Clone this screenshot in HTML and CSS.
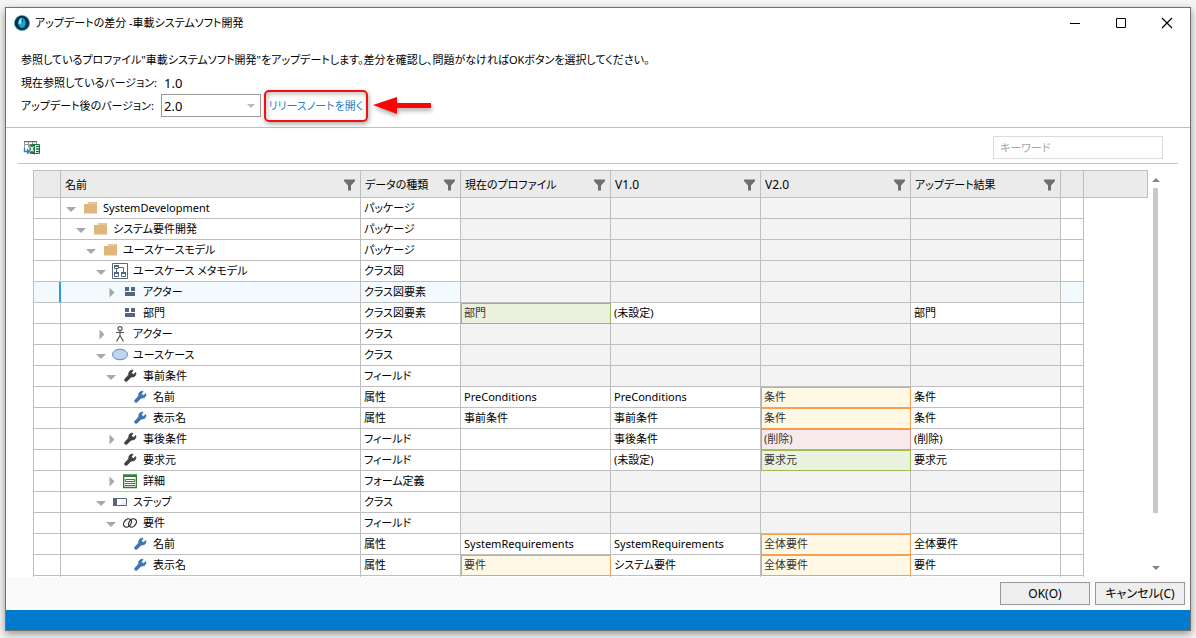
FILE: index.html
```html
<!DOCTYPE html>
<html lang="ja">
<head>
<meta charset="utf-8">
<title>アップデートの差分 -車載システムソフト開発</title>
<link rel="stylesheet" href="styles.css">
</head>
<body>
<svg class="defs" aria-hidden="true">
  <symbol id="open" viewBox="0 0 11 16"><path d="M0 7h10L5 12z" fill="#a8a8a8"/></symbol>
  <symbol id="closed" viewBox="0 0 11 16"><path d="M3.500 3.500v10L8.500 8.500z" fill="#a8a8a8"/></symbol>
  <symbol id="funnel" viewBox="0 0 12 12"><path d="M0 .5h11v1.500L7 6.500v5H4v-5L0 2z" fill="#6f6f6f"/></symbol>
  <symbol id="folder" viewBox="0 0 16 16"><path d="M2 4h3.500l1-2H15v11.500H2z" fill="#deb77d"/><path d="M6.500 4.500l.8-1.500H14" fill="none" stroke="#f3dfc0" stroke-width=".8"/></symbol>
  <symbol id="diagram" viewBox="0 0 16 16"><path d="M.5.5h15v15H.5z" fill="#fff" stroke="#56677f"/><path d="M2.500 2.500h4v3h-4zM2.500 10.500h4v3h-4zM9.500 10.500h4v3h-4zM4.500 6v4M7 4.500h4.500V10" fill="none" stroke="#56677f"/><path d="M2 2h5v2H2zM2 9h5v2H2zM9 9h5v2H9z" fill="#56677f"/></symbol>
  <symbol id="element" viewBox="0 0 16 16"><path d="M3 3h4v4H3zM9 3h4v4H9zM3 8h10v4H3z" fill="#53657f"/></symbol>
  <symbol id="actor" viewBox="0 0 16 16"><g fill="none" stroke="#555" stroke-width="1.200"><circle cx="8" cy="2.600" r="2"/><path d="M8 4.600V10M4 6.500h8M8 9.500l-3.500 6M8 9.500l3.500 6"/></g></symbol>
  <symbol id="usecase" viewBox="0 0 16 16"><ellipse cx="8" cy="7.500" rx="7.500" ry="5.300" fill="#bdd4f0" stroke="#5b87c0"/></symbol>
  <symbol id="wrench" viewBox="0 0 16 16"><path d="M11 2.300L9.500 4.500l.6 1.600 1.700.3 1.900-1.800c.7 2.400-.9 4.400-3.400 4.300-1 0-1.500.3-2.200 1l-2.700 2.900c-1.600 1.500-3.700-.3-2.300-2.100L6 7.800c.7-.7.800-1.200.8-2.200C6.900 3.200 8.900 1.800 11 2.300z" fill="currentColor" stroke="currentColor" stroke-width=".9" stroke-linejoin="round"/></symbol>
  <symbol id="form" viewBox="0 0 16 16"><path d="M1.700 2.200h12.600v12.300H1.700z" fill="#fff" stroke="#348038" stroke-width="1.400"/><path d="M1 1.500h14V4H1z" fill="#348038"/><path d="M3.500 6.500h9v2h-9zM3 10.500h10M3 12.500h10" fill="none" stroke="#348038"/></symbol>
  <symbol id="step" viewBox="0 0 16 16"><path d="M1.500 4.500h13v7h-13z" fill="#fff" stroke="#56677f"/><path d="M14 5v6H7z" fill="#eee"/><path d="M1 4h4v8H1z" fill="#56677f"/></symbol>
  <symbol id="rings" viewBox="0 0 16 16"><g fill="none" stroke="#333" stroke-width="1.300"><ellipse cx="5.500" cy="8" rx="3.400" ry="4.600" transform="rotate(40 5.500 8)"/><ellipse cx="10.500" cy="8" rx="3.400" ry="4.600" transform="rotate(40 10.500 8)"/></g></symbol>
</svg>
<main class="window">
  <header class="titlebar">
    <svg class="logo" viewBox="0 0 16 16"><circle cx="8" cy="8" r="7.600" fill="#05344b" stroke="#3aa5bd" stroke-width=".6"/><ellipse cx="8" cy="8" rx="3.600" ry="5" fill="#16a9d8"/><path d="M8 3v5l-3.400 1.500C4 6 5.500 3 8 3z" fill="#8fe0f2"/><path d="M8.200 4v3.500" stroke="#05344b"/></svg>
    <h1 class="title">アップデートの差分 -車載システムソフト開発</h1>
    <button class="winbtn" aria-label="最小化"><svg viewBox="0 0 12 12"><path d="M1 6.500h10" stroke="#000"/></svg></button>
    <button class="winbtn" aria-label="最大化"><svg viewBox="0 0 12 12"><path d="M1.500 1.500h9v9h-9z" fill="none" stroke="#000"/></svg></button>
    <button class="winbtn" aria-label="閉じる"><svg viewBox="0 0 12 12"><path d="M1 1l10 10M11 1L1 11" stroke="#000" stroke-width="1.200"/></svg></button>
  </header>
  <section class="intro">
    <p class="line">参照しているプロファイル"車載システムソフト開発"をアップデートします。差分を確認し、問題がなければOKボタンを選択してください。</p>
    <div class="line"><span class="label">現在参照しているバージョン:</span><span class="value">1.0</span></div>
    <div class="line">
      <label class="label" for="version">アップデート後のバージョン:</label>
      <span class="combo"><select id="version"><option>2.0</option></select><svg viewBox="0 0 8 4"><path d="M0 0h8L4 4z" fill="#b9b9b9"/></svg></span>
      <a class="notes" href="#notes">リリースノートを開く</a>
      <svg class="pointer" viewBox="0 0 60 20"><path d="M1 9L25 1v6h34v5H25v6z" fill="#fa0505"/></svg>
    </div>
  </section>
  <section class="toolbar">
    <button class="export" aria-label="Excelに出力"><svg viewBox="0 0 18 16"><path d="M1.500 8V1.500h12V4M1.500 4.500h9M5.500 1.500v6M9.500 1.500v4" fill="none" stroke="#999"/><path d="M1 1h13v1.200H1z" fill="#666"/><path d="M1.500 8v3.500H6M4 9.300l2.200 2.200L4 13.700" fill="none" stroke="#3c7cc0" stroke-width="1.400"/><path d="M6.500 5L12 3.500v11L6.500 13.500z" fill="#207347"/><path d="M12 4.500h4.500v9H12" fill="#fff" stroke="#207347"/><path d="M13 6.500h3M13 9h3M13 11.500h3" stroke="#207347" stroke-width="1.400"/><path d="M7.500 6.500l3 5M10.500 6.500l-3 5" stroke="#fff" stroke-width="1.200"/></svg></button>
    <input class="search" type="text" placeholder="キーワード" aria-label="キーワード">
  </section>
  <section class="content">
    <div class="viewport">
      <table class="grid">
        <colgroup><col class="c-mark"><col class="c-name"><col class="c-type"><col class="c-val"><col class="c-val"><col class="c-val"><col class="c-val"><col class="c-end"><col></colgroup>
        <thead><tr>
          <th></th>
          <th><div class="head">名前<svg><use href="#funnel"/></svg></div></th>
          <th><div class="head">データの種類<svg><use href="#funnel"/></svg></div></th>
          <th><div class="head">現在のプロファイル<svg><use href="#funnel"/></svg></div></th>
          <th><div class="head"><span class="latin">V1.0</span><svg><use href="#funnel"/></svg></div></th>
          <th><div class="head"><span class="latin">V2.0</span><svg><use href="#funnel"/></svg></div></th>
          <th><div class="head">アップデート結果<svg><use href="#funnel"/></svg></div></th>
          <th></th><th></th>
        </tr></thead>
        <tbody>
          <tr><td></td><td><div class="node l0"><svg class="tw"><use href="#open"/></svg><svg class="ic"><use href="#folder"/></svg>SystemDevelopment</div></td><td>パッケージ</td><td class="na"></td><td class="na"></td><td class="na"></td><td class="na"></td><td></td><td></td></tr>
          <tr><td></td><td><div class="node l1"><svg class="tw"><use href="#open"/></svg><svg class="ic"><use href="#folder"/></svg>システム要件開発</div></td><td>パッケージ</td><td class="na"></td><td class="na"></td><td class="na"></td><td class="na"></td><td></td><td></td></tr>
          <tr><td></td><td><div class="node l2"><svg class="tw"><use href="#open"/></svg><svg class="ic"><use href="#folder"/></svg>ユースケースモデル</div></td><td>パッケージ</td><td class="na"></td><td class="na"></td><td class="na"></td><td class="na"></td><td></td><td></td></tr>
          <tr><td></td><td><div class="node l3"><svg class="tw"><use href="#open"/></svg><svg class="ic"><use href="#diagram"/></svg>ユースケース メタモデル</div></td><td>クラス図</td><td class="na"></td><td class="na"></td><td class="na"></td><td class="na"></td><td></td><td></td></tr>
          <tr class="current"><td></td><td><div class="node l4"><svg class="tw"><use href="#closed"/></svg><svg class="ic"><use href="#element"/></svg>アクター</div></td><td>クラス図要素</td><td class="na"></td><td class="na"></td><td class="na"></td><td class="na"></td><td></td><td></td></tr>
          <tr><td></td><td><div class="node l4"><svg class="tw"></svg><svg class="ic"><use href="#element"/></svg>部門</div></td><td>クラス図要素</td><td class="added">部門</td><td>(未設定)</td><td class="na"></td><td>部門</td><td></td><td></td></tr>
          <tr><td></td><td><div class="node l3"><svg class="tw"><use href="#closed"/></svg><svg class="ic"><use href="#actor"/></svg>アクター</div></td><td>クラス</td><td class="na"></td><td class="na"></td><td class="na"></td><td class="na"></td><td></td><td></td></tr>
          <tr><td></td><td><div class="node l3"><svg class="tw"><use href="#open"/></svg><svg class="ic"><use href="#usecase"/></svg>ユースケース</div></td><td>クラス</td><td class="na"></td><td class="na"></td><td class="na"></td><td class="na"></td><td></td><td></td></tr>
          <tr><td></td><td><div class="node l4"><svg class="tw"><use href="#open"/></svg><svg class="ic dark"><use href="#wrench"/></svg>事前条件</div></td><td>フィールド</td><td class="na"></td><td class="na"></td><td class="na"></td><td class="na"></td><td></td><td></td></tr>
          <tr><td></td><td><div class="node l5"><svg class="tw"></svg><svg class="ic blue"><use href="#wrench"/></svg>名前</div></td><td>属性</td><td>PreConditions</td><td>PreConditions</td><td class="changed">条件</td><td>条件</td><td></td><td></td></tr>
          <tr><td></td><td><div class="node l5"><svg class="tw"></svg><svg class="ic blue"><use href="#wrench"/></svg>表示名</div></td><td>属性</td><td>事前条件</td><td>事前条件</td><td class="changed">条件</td><td>条件</td><td></td><td></td></tr>
          <tr><td></td><td><div class="node l4"><svg class="tw"><use href="#closed"/></svg><svg class="ic dark"><use href="#wrench"/></svg>事後条件</div></td><td>フィールド</td><td></td><td>事後条件</td><td class="removed">(削除)</td><td>(削除)</td><td></td><td></td></tr>
          <tr><td></td><td><div class="node l4"><svg class="tw"></svg><svg class="ic dark"><use href="#wrench"/></svg>要求元</div></td><td>フィールド</td><td></td><td>(未設定)</td><td class="added">要求元</td><td>要求元</td><td></td><td></td></tr>
          <tr><td></td><td><div class="node l4"><svg class="tw"><use href="#closed"/></svg><svg class="ic"><use href="#form"/></svg>詳細</div></td><td>フォーム定義</td><td class="na"></td><td class="na"></td><td class="na"></td><td class="na"></td><td></td><td></td></tr>
          <tr><td></td><td><div class="node l3"><svg class="tw"><use href="#open"/></svg><svg class="ic"><use href="#step"/></svg>ステップ</div></td><td>クラス</td><td class="na"></td><td class="na"></td><td class="na"></td><td class="na"></td><td></td><td></td></tr>
          <tr><td></td><td><div class="node l4"><svg class="tw"><use href="#open"/></svg><svg class="ic"><use href="#rings"/></svg>要件</div></td><td>フィールド</td><td class="na"></td><td class="na"></td><td class="na"></td><td class="na"></td><td></td><td></td></tr>
          <tr><td></td><td><div class="node l5"><svg class="tw"></svg><svg class="ic blue"><use href="#wrench"/></svg>名前</div></td><td>属性</td><td>SystemRequirements</td><td>SystemRequirements</td><td class="changed">全体要件</td><td>全体要件</td><td></td><td></td></tr>
          <tr><td></td><td><div class="node l5"><svg class="tw"></svg><svg class="ic blue"><use href="#wrench"/></svg>表示名</div></td><td>属性</td><td class="changed">要件</td><td>システム要件</td><td class="changed">全体要件</td><td>要件</td><td></td><td></td></tr>
          <tr><td></td><td></td><td></td><td></td><td></td><td></td><td></td><td></td><td></td></tr>
        </tbody>
      </table>
    </div>
    <div class="scrollbar" aria-hidden="true">
      <svg viewBox="0 0 8 4"><path d="M0 4h8L4 0z" fill="#858585"/></svg>
      <div class="track"><div class="thumb"></div></div>
      <svg viewBox="0 0 8 4"><path d="M0 0h8L4 4z" fill="#858585"/></svg>
    </div>
  </section>
  <footer class="actions">
    <button class="btn">OK(O)</button>
    <button class="btn">キャンセル(C)</button>
  </footer>
  <div class="status"></div>
</main>
</body>
</html>
```
FILE: styles.css
```css
* { box-sizing: border-box; }
html, body { height: 100%; margin: 0; }
body {
  padding: 7px 5px;
  background: #f5f5f5;
  color: #000;
  font: 11px/16px "Noto Sans", "Noto Sans CJK JP", sans-serif;
  font-feature-settings: "palt";
  overflow: hidden;
}
button, input, select { font: inherit; font-feature-settings: inherit; color: inherit; border-radius: 0; }
.defs { position: absolute; width: 0; height: 0; }
.window {
  display: flex;
  flex-direction: column;
  height: 100%;
  background: #fff;
  border: 1px solid #707070;
  box-shadow: 0 3px 8px rgba(0, 0, 0, .4);
}
.titlebar { display: flex; align-items: center; height: 29px; padding-left: 8px; flex: none; }
.logo { width: 16px; height: 16px; margin-right: 5px; }
.title { flex: 1; margin: 0; font-size: 11px; font-weight: 400; }
.winbtn { width: 46px; height: 28px; padding: 0; border: 0; background: none; }
.winbtn svg { display: block; width: 12px; height: 12px; margin: 0 auto; }

.intro { flex: none; padding: 11px 15px 10px; border-bottom: 1px solid #c0c0c0; }
.line { display: flex; align-items: center; height: 23px; margin: 0; white-space: nowrap; }
.label { width: 140px; }
.value { padding-left: 3px; font-size: 13px; }
.combo { position: relative; width: 100px; height: 23px; }
.combo select {
  width: 100%;
  height: 100%;
  padding: 0 2px;
  border: 1px solid #999;
  background: #fff;
  appearance: none;
  font-size: 13px;
}
.combo svg { position: absolute; right: 6px; top: 10px; width: 8px; height: 4px; }
.notes {
  display: flex;
  align-items: center;
  justify-content: center;
  flex: none;
  width: 104px;
  height: 32px;
  margin: 0 4px 0 3px;
  border: 2px solid #f01010;
  border-radius: 5px;
  box-shadow: 1px 2px 5px rgba(0, 0, 0, .35), inset 1px 2px 5px rgba(0, 0, 0, .25);
  color: #2b7fc9;
  text-decoration: none;
}
.pointer { width: 60px; height: 20px; filter: drop-shadow(1px 3px 2px rgba(0, 0, 0, .3)); }

.toolbar {
  display: flex;
  align-items: center;
  justify-content: space-between;
  flex: none;
  height: 36px;
  margin: 0 12px;
  padding: 4px 15px 0 5px;
  border-bottom: 1px solid #c0c0c0;
}
.export { width: 18px; height: 16px; padding: 0; border: 0; background: none; }
.export svg { display: block; width: 18px; height: 16px; }
.search { width: 170px; height: 23px; padding: 0 6px; border: 1px solid #dcdcdc; background: #fff; }
.search::placeholder { color: #a6a6a6; opacity: 1; }

.content { display: flex; flex: 1; min-height: 0; padding: 6px 27px 0; }
.viewport { flex: 1; min-width: 0; overflow: hidden; }
.grid { width: 100%; table-layout: fixed; border-collapse: separate; border-spacing: 0; }
.c-mark { width: 28px; }
.c-name { width: 300px; }
.c-type { width: 100px; }
.c-val { width: 150px; }
.c-end { width: 23px; }
.grid th {
  height: 28px;
  padding: 2px 4px 0;
  background: #ebebeb;
  border: solid #bfbfbf;
  border-width: 1px 1px 1px 0;
  font-weight: 400;
  text-align: left;
}
.grid td {
  height: 21px;
  padding: 0 3px;
  border: solid #bfbfbf;
  border-width: 0 1px 1px 0;
  white-space: nowrap;
}
.grid th:first-child, .grid td:first-child { border-left-width: 1px; }
.grid td:last-child { border: 0; }
.head { display: flex; align-items: center; justify-content: space-between; white-space: nowrap; }
.head svg { width: 12px; height: 12px; }
.latin { font-size: 12px; }
.grid .na { background: #f3f3f3; }
.grid .added { background: #eaf1de; border-color: #9bbb59; box-shadow: inset 1px 1px #9bbb59; color: #333; }
.grid .changed { background: #fff8e5; border-color: #f79f57; box-shadow: inset 1px 1px #f79f57; color: #333; }
.grid .removed { background: #f8eaea; border-color: #d99795; box-shadow: inset 1px 1px #d99795; color: #333; }
.current td:not(.na):not(:last-child) { background: #f3fafd; }
.current td:first-child { border-right-color: #3399dd; box-shadow: inset -1px 0 #3399dd; }
.node { display: flex; align-items: center; gap: 5px; height: 20px; }
.tw { width: 11px; height: 16px; flex: none; }
.ic { width: 16px; height: 16px; flex: none; }
.dark { color: #404040; }
.blue { color: #3b75b3; }
.l0 { padding-left: 2px; }
.l1 { padding-left: 12px; }
.l2 { padding-left: 22px; }
.l3 { padding-left: 32px; }
.l4 { padding-left: 42px; }
.l5 { padding-left: 52px; }

.scrollbar { display: flex; flex-direction: column; align-items: center; width: 15px; padding: 8px 0 7px; flex: none; }
.scrollbar svg { width: 8px; height: 4px; flex: none; }
.track { flex: 1; width: 5px; padding: 6px 0 0; }
.thumb { width: 5px; height: 86%; background: #c9c9c9; }

.actions { display: flex; justify-content: flex-end; gap: 5px; flex: none; padding: 5px; background: #fafafa; }
.btn { width: 90px; height: 23px; padding: 0; border: 1px solid #999; background: #eee; font-size: 12px; }
.status { flex: none; height: 20px; background: #007acc; }
```
